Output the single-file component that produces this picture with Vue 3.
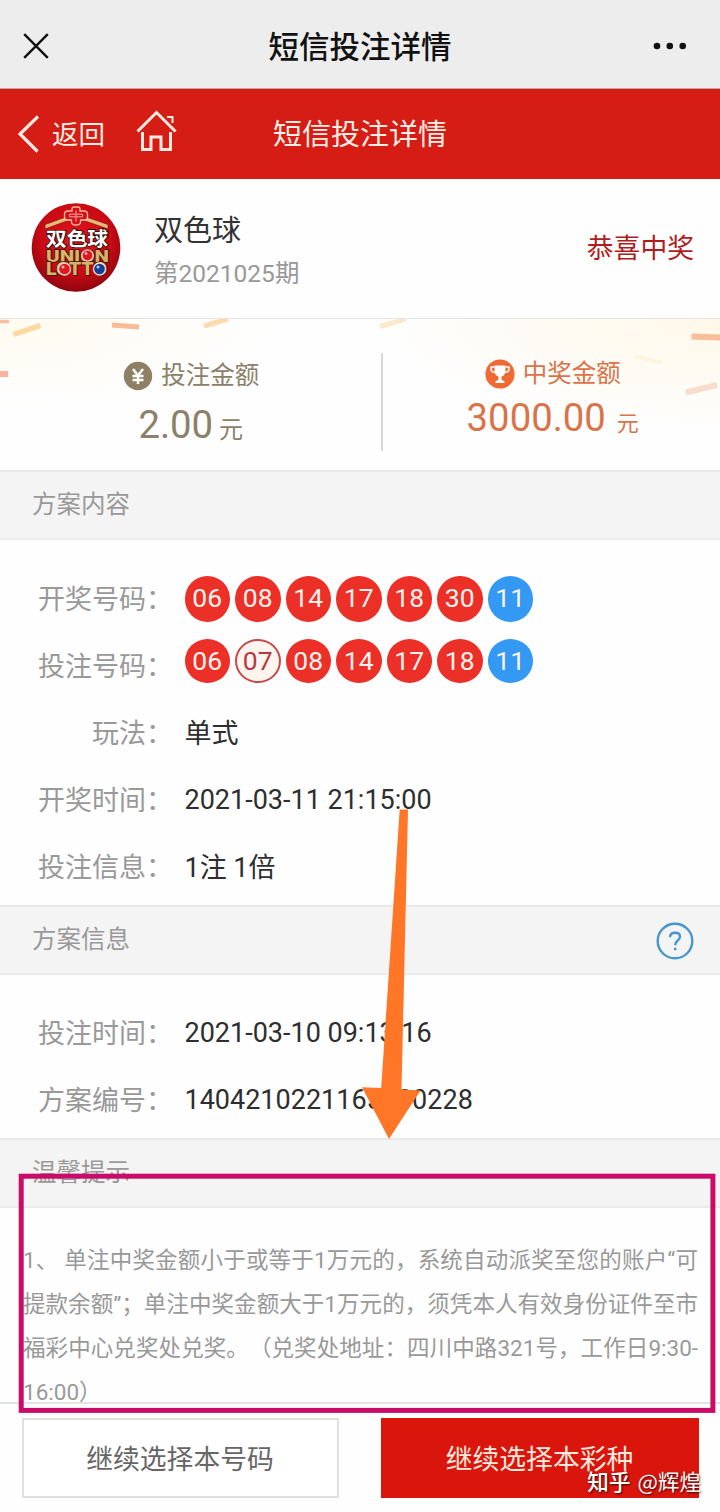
<template>
  <div class="page">
    <!-- Barra de la app -->
    <header class="app-bar">
      <svg class="close-icon" viewBox="0 0 26 26">
        <path d="M1.2 1.2L24.8 24.8M24.8 1.2L1.2 24.8" />
      </svg>
      <h1>短信投注详情</h1>
      <svg class="more-icon" viewBox="0 0 34 8">
        <circle cx="4" cy="4" r="3.3" />
        <circle cx="16.8" cy="4" r="3.3" />
        <circle cx="29.7" cy="4" r="3.3" />
      </svg>
    </header>

    <nav class="nav-bar">
      <div class="nav-left">
        <svg class="back-icon" viewBox="0 0 22 38">
          <path d="M20 1.5L2 19L19.5 36.5" />
        </svg>
        <span>返回</span>
        <svg class="home-icon" viewBox="0 0 42 42">
          <path d="M1.5 21.5L20.5 2.5L39.5 21.5" />
          <path d="M31 7H36.5V13" class="thin" />
          <path d="M6.5 22V39.5H15V27H25V39.5H34.5V22" />
        </svg>
      </div>
      <h2>短信投注详情</h2>
    </nav>

    <section class="lottery">
      <svg class="logo" viewBox="0 0 90 90">
        <defs>
          <radialGradient id="logoRed" cx="50%" cy="40%" r="60%">
            <stop offset="0" stop-color="#e3121b" />
            <stop offset="0.65" stop-color="#cb0a14" />
            <stop offset="1" stop-color="#8e0510" />
          </radialGradient>
        </defs>
        <circle cx="45" cy="44.5" r="44.3" fill="url(#logoRed)" />
        <path d="M14 26V21.5L36 13.5H54L77 21.5V26L54 18H36Z" fill="#e8b877" stroke="#8b1a10" stroke-width="0.8" />
        <path
          d="M41 8V6Q41 4 43 4H47Q49 4 49 6V8H53Q56.5 8 56.5 11V14Q56.5 17 53 17H49.5V19Q49.5 22 45 22Q40.5 22 40.5 19V17H37Q33.5 17 33.5 14V11Q33.5 8 37 8Z"
          fill="#d5101a" stroke="#f3b8a0" stroke-width="1.3"
        />
        <path d="M38.5 11.2H51.5V13.8H38.5ZM45 7.5V18.5" fill="none" stroke="#f3a898" stroke-width="1" />
        <text x="46.5" y="58.5" class="logo-en" textLength="63" lengthAdjust="spacingAndGlyphs">UNION</text>
        <text x="45.5" y="72.3" class="logo-en big" textLength="61" lengthAdjust="spacingAndGlyphs">LOTTO</text>
        <text x="46" y="42.5" class="logo-cn" textLength="62" lengthAdjust="spacingAndGlyphs">双色球</text>
        <g stroke="#f7d9c4" stroke-width="1.3">
          <circle cx="56.5" cy="52.5" r="5.6" fill="#e01620" />
          <circle cx="33.5" cy="66" r="6" fill="#e01620" />
          <circle cx="68.5" cy="66" r="6" fill="#123f9c" />
        </g>
        <g fill="#fff" opacity="0.7">
          <circle cx="55" cy="50.5" r="1.4" />
          <circle cx="32" cy="64" r="1.5" />
          <circle cx="67" cy="64" r="1.5" />
        </g>
      </svg>
      <div class="lottery-info">
        <div class="lottery-name">双色球</div>
        <div class="lottery-issue">第2021025期</div>
      </div>
      <div class="lottery-result">恭喜中奖</div>
    </section>

    <!-- Importes -->
    <section class="amounts">
      <svg class="confetti" viewBox="0 0 720 151">
        <path d="M0 2.5H9" stroke="#f9bda3" stroke-width="3.5" />
        <path d="M13.5 15.5L40.5 6.5" stroke="#fbd9a0" stroke-width="5.5" />
        <path d="M112 6L139 8" stroke="#f8bb94" stroke-width="5" />
        <path d="M204 7L228 0" stroke="#fbdbae" stroke-width="5" />
        <path d="M0 55H8" stroke="#f9b39d" stroke-width="6" />
        <path d="M380 7.5L406 0" stroke="#f8eacb" stroke-width="5" />
        <path d="M691.5 17.5L720 18.5" stroke="#f9be98" stroke-width="6" />
        <path d="M635 37.5L662 43.5" stroke="#fbf5df" stroke-width="4" />
        <path d="M686 73.5L717 66" stroke="#fadccd" stroke-width="6" />
      </svg>
      <div class="amount bet">
        <div class="amount-label">
          <svg viewBox="0 0 30 30">
            <circle cx="15" cy="15" r="14.2" fill="#8d8064" />
            <path d="M10 8L15 14.5L20 8M15 14.5V23M9.5 15H20.5M9.5 19H20.5" fill="none" stroke="#fff" stroke-width="2.5" />
          </svg>
          <span>投注金额</span>
        </div>
        <div class="amount-value"><b>2.00</b><span>元</span></div>
      </div>
      <div class="amount prize">
        <div class="amount-label">
          <svg viewBox="0 0 30 30">
            <circle cx="15" cy="15" r="14.6" fill="#ee6a32" />
            <path d="M9.5 6.5H20.5V11Q20.5 16.5 16.5 17.5V20.5L19.5 22.5V24H10.5V22.5L13.5 20.5V17.5Q9.5 16.5 9.5 11Z" fill="#fff" />
            <path d="M9.5 8H6V10Q6 13 10 13.5M20.5 8H24V10Q24 13 20 13.5" fill="none" stroke="#fff" stroke-width="1.5" />
          </svg>
          <span>中奖金额</span>
        </div>
        <div class="amount-value"><b>3000.00</b><span>元</span></div>
      </div>
    </section>

    <div class="section-title">方案内容</div>
    <section class="details content">
      <div v-for="row in numberRows" :key="row.label" class="row balls-row">
        <span class="label">{{ row.label }}：</span>
        <div class="balls">
          <span v-for="ball in row.balls" :key="ball.n + ball.type" class="ball" :class="ball.type">{{ ball.n }}</span>
        </div>
      </div>
      <div v-for="row in contentRows" :key="row.label" class="row">
        <span class="label">{{ row.label }}：</span>
        <span class="value" :class="{ numeric: row.numeric }">{{ row.value }}</span>
      </div>
    </section>

    <div class="section-title">
      <span>方案信息</span>
      <svg class="help-icon" viewBox="0 0 38 38">
        <circle cx="19" cy="19" r="17.3" />
        <path d="M14 15.2Q14 10.8 19.2 10.8Q24 10.8 24 14.8Q24 17 21.5 18.8Q19.2 20.6 19.2 23.3M19.2 25.8V28.3" />
      </svg>
    </div>
    <section class="details info">
      <div v-for="row in infoRows" :key="row.label" class="row">
        <span class="label">{{ row.label }}：</span>
        <span class="value numeric">{{ row.value }}</span>
      </div>
    </section>

    <div class="section-title">温馨提示</div>
    <section class="tips">
      <p v-for="line in tips" :key="line">{{ line }}</p>
    </section>

    <footer class="actions">
      <button class="btn">继续选择本号码</button>
      <button class="btn primary">继续选择本彩种</button>
    </footer>

    <!-- Marcas sobre la página -->
    <svg class="marks" viewBox="0 0 720 1512">
      <path d="M399.7 809.5H408L401.5 1089.5L420.5 1090.5L389 1139L362 1087.3L381.2 1088Z" fill="#ff7726" />
      <rect x="21.2" y="1176.2" width="691.7" height="234.2" fill="none" stroke="#c90c68" stroke-width="5" />
    </svg>
    <div class="watermark"><b>知乎</b> @辉煌</div>
  </div>
</template>

<script setup>
const toBalls = (reds, blue, missed = []) => [
  ...reds.map((n) => ({ n, type: missed.includes(n) ? 'missed' : 'red' })),
  { n: blue, type: 'blue' }
];

const numberRows = [
  { label: '开奖号码', balls: toBalls(['06', '08', '14', '17', '18', '30'], '11') },
  { label: '投注号码', balls: toBalls(['06', '07', '08', '14', '17', '18'], '11', ['07']) }
];

const contentRows = [
  { label: '玩法', value: '单式' },
  { label: '开奖时间', value: '2021-03-11 21:15:00', numeric: true },
  { label: '投注信息', value: '1注 1倍' }
];

const infoRows = [
  { label: '投注时间', value: '2021-03-10 09:13:16' },
  { label: '方案编号', value: '1404210221165300228' }
];

const tips = [
  '1、 单注中奖金额小于或等于1万元的，系统自动派奖至您的账户“可',
  '提款余额”；单注中奖金额大于1万元的，须凭本人有效身份证件至市',
  '福彩中心兑奖处兑奖。（兑奖处地址：四川中路321号，工作日9:30-',
  '16:00）'
];
</script>

<style>
body {
  margin: 0;
  background: #fff;
}
</style>

<style scoped>
.page {
  position: relative;
  width: 720px;
  height: 1512px;
  overflow: hidden;
  display: flex;
  flex-direction: column;
  background: #fefefe;
  font-family: Roboto, "Noto Sans CJK SC", sans-serif;
  color: #333;
}

.page * {
  box-sizing: border-box;
}

h1,
h2,
p {
  margin: 0;
  font-weight: 400;
}

/* Cabeceras */
.app-bar {
  flex: none;
  height: 89px;
  padding: 4px 33px 0 23px;
  display: grid;
  grid-template-columns: 1fr auto 1fr;
  align-items: center;
  background: #ededed;
  border-bottom: 1px solid #c9a39f;
}

.app-bar h1 {
  margin-left: 10px;
  padding-top: 4px;
  font-size: 30.5px;
  font-weight: 500;
  line-height: 44px;
  color: #111;
}

.close-icon {
  width: 26px;
  height: 26px;
  fill: none;
  stroke: #111;
  stroke-width: 2.4;
}

.more-icon {
  justify-self: end;
  width: 34px;
  height: 8px;
  fill: #111;
}

.nav-bar {
  flex: none;
  height: 90px;
  padding: 0 18px;
  display: grid;
  grid-template-columns: 1fr auto 1fr;
  align-items: center;
  background: #d51d15;
  color: #ffeee6;
}

.nav-bar h2 {
  padding-top: 2px;
  font-size: 29px;
  line-height: 40px;
}

.nav-left {
  display: flex;
  align-items: center;
  font-size: 26.5px;
  line-height: 40px;
}

.nav-left span {
  padding-top: 2px;
}

.nav-left svg {
  fill: none;
  stroke: #ffe9e0;
}

.back-icon {
  width: 22px;
  height: 38px;
  margin-right: 12px;
  stroke-width: 3.2;
}

.home-icon {
  width: 42px;
  height: 42px;
  margin: -6px 0 0 31px;
  stroke-width: 3;
}

.home-icon .thin {
  stroke-width: 2;
}

/* Lotería */
.lottery {
  flex: none;
  height: 140px;
  padding: 0 26px 2px 31px;
  display: flex;
  align-items: center;
  border-bottom: 1px solid #e4e4e4;
}

.logo {
  width: 90px;
  height: 90px;
}

.logo-cn {
  font: 700 19.5px "Noto Sans CJK SC", sans-serif;
  text-anchor: middle;
  fill: #fff;
  stroke: #33130f;
  stroke-width: 1.8;
  paint-order: stroke;
}

.logo-en {
  font: 900 17px Roboto, sans-serif;
  text-anchor: middle;
  fill: #dcb163;
  stroke: #3a120c;
  stroke-width: 1.6;
  paint-order: stroke;
}

.logo-en.big {
  font-size: 17.5px;
}

.lottery-info {
  flex: 1;
  margin-left: 33px;
  padding-top: 8px;
}

.lottery-name {
  font-size: 29px;
  line-height: 44px;
}

.lottery-issue {
  font-size: 24.5px;
  line-height: 42px;
  color: #999;
}

.lottery-result {
  margin-top: -2px;
  font-size: 26.8px;
  color: #b01c1c;
}

/* Importes */
.amounts {
  position: relative;
  flex: none;
  height: 151px;
  display: flex;
  background:
    radial-gradient(ellipse 280px 90px at 0 0, #fffbef, rgba(255, 251, 239, 0)),
    radial-gradient(ellipse 340px 110px at 100% 0, #fff8e8, rgba(255, 248, 232, 0));
}

.amounts::after {
  content: "";
  position: absolute;
  left: 381px;
  top: 34px;
  width: 2px;
  height: 98px;
  background: #d5dad2;
}

.confetti {
  position: absolute;
  left: 0;
  top: 0;
  width: 720px;
  height: 151px;
}

.amount {
  position: relative;
  display: flex;
  flex-direction: column;
  align-items: center;
}

.amount.bet {
  width: 383px;
  padding-top: 39px;
  color: #8b8069;
}

.amount.prize {
  width: 338px;
  padding: 37px 0 0 3px;
  color: #d9744a;
}

.amount-label {
  display: flex;
  align-items: center;
  gap: 8px;
  font-size: 24.5px;
  line-height: 36px;
}

.amount-label svg {
  width: 30px;
  height: 30px;
  margin-top: -1px;
}

.amount-value {
  display: flex;
  align-items: baseline;
  line-height: 50px;
}

.bet .amount-value {
  margin: 6px 1px 0 0;
}

.amount-value b {
  font-size: 38.3px;
  font-weight: 400;
}

.amount-value span {
  margin-left: 6px;
  font-size: 24px;
}

.prize .amount-value {
  margin-top: 1px;
}

.prize .amount-value span {
  margin-left: 11px;
  font-size: 22px;
}

/* Secciones */
.section-title {
  flex: none;
  height: 70px;
  padding: 0 26px 6px 32px;
  display: flex;
  align-items: center;
  justify-content: space-between;
  background: #f4f4f4;
  border-top: 2px solid #e9e9e9;
  border-bottom: 2px solid #ebebeb;
  font-size: 24.5px;
  color: #999;
}

.help-icon {
  width: 38px;
  height: 38px;
  margin-top: 7px;
  fill: none;
  stroke: #4596cf;
  stroke-width: 2.4;
}

.details {
  flex: none;
  font-size: 27px;
}

.content {
  height: 365px;
  padding-top: 25px;
}

.info {
  height: 163px;
  padding-top: 24px;
}

.row {
  display: flex;
  align-items: center;
  height: 67px;
}

.label {
  width: 173px;
  padding-bottom: 3px;
  text-align: right;
  color: #999;
}

.value {
  margin-left: 11.5px;
  padding-bottom: 3px;
  white-space: pre;
  color: #2e2e2e;
}

.value.numeric {
  padding-bottom: 0;
}

.balls {
  display: flex;
  gap: 5px;
  margin: 1px 0 0 11.5px;
}

.balls-row + .balls-row .balls {
  margin-top: -9px;
}

.ball {
  width: 45.5px;
  height: 45.5px;
  border-radius: 50%;
  font-size: 26.5px;
  line-height: 43px;
  text-align: center;
  color: #fff3ee;
}

.balls-row + .balls-row .ball {
  height: 44px;
}

.ball.red {
  background: #ec3027;
}

.ball.blue {
  background: #3399f3;
}

.ball.missed {
  border: 2px solid #c4484c;
  line-height: 40px;
  background: #fff5ee;
  color: #b8393f;
}

/* Avisos */
.tips {
  flex: none;
  height: 194px;
  padding: 30px 22px 0 23px;
  font-size: 22.5px;
  line-height: 44px;
  color: #999;
  white-space: nowrap;
  text-spacing-trim: space-all;
}

.tips p {
  text-align: justify;
  text-align-last: justify;
}

.tips p:last-child {
  text-align-last: left;
}

.actions {
  flex: 1;
  padding: 14px 21px 0 22px;
  display: flex;
  justify-content: space-between;
  border-top: 2px solid #e0e4e3;
}

.btn {
  width: 317px;
  height: 80px;
  padding: 0 1px 2px 0;
  border: 2px solid #dfe1e1;
  background: #fff;
  font-family: inherit;
  font-size: 26.8px;
  color: #666;
}

.btn.primary {
  width: 318px;
  border-color: #da150c;
  background: #da150c;
  color: #ffeadf;
}

/* Marcas */
.marks {
  position: absolute;
  left: 0;
  top: 0;
  width: 720px;
  height: 1512px;
}

.watermark {
  position: absolute;
  right: 19px;
  bottom: 16px;
  font-family: "Noto Sans CJK SC", sans-serif;
  font-size: 21.6px;
  line-height: 30px;
  color: #fff;
  text-shadow: 1px 1px 2px rgba(0, 0, 0, 0.75);
}

.watermark b {
  margin-right: 2px;
  font-weight: 500;
}
</style>
